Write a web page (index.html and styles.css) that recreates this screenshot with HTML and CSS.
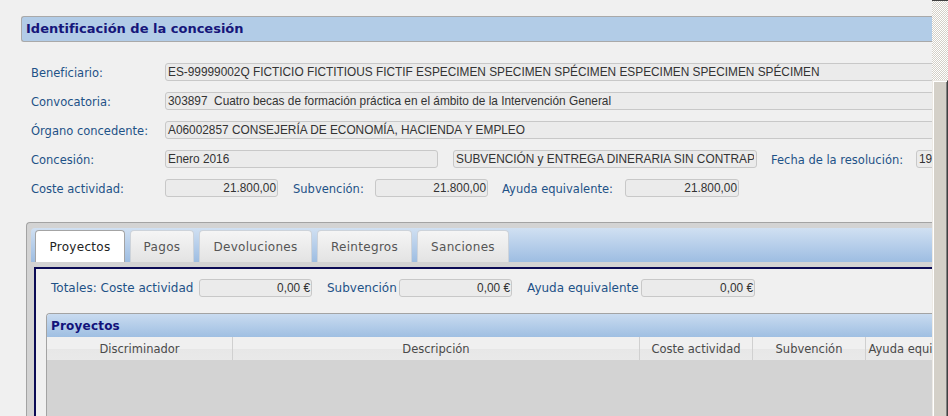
FILE: index.html
```html
<!DOCTYPE html>
<html lang="es">
<head>
<meta charset="utf-8">
<title>Identificación de la concesión</title>
<link rel="stylesheet" href="styles.css">
</head>
<body>
<div class="screen">
  <div class="viewport">
    <div class="page">
      <div class="section-title">Identificación de la concesión</div>

      <div class="form">
        <div class="row">
          <span class="lbl">Beneficiario:</span>
          <span class="field w-long">ES-99999002Q FICTICIO FICTITIOUS FICTIF ESPECIMEN SPECIMEN SPÉCIMEN ESPECIMEN SPECIMEN SPÉCIMEN</span>
        </div>
        <div class="row">
          <span class="lbl">Convocatoria:</span>
          <span class="field w-long">303897&nbsp; Cuatro becas de formación práctica en el ámbito de la Intervención General</span>
        </div>
        <div class="row">
          <span class="lbl">Órgano concedente:</span>
          <span class="field w-long">A06002857 CONSEJERÍA DE ECONOMÍA, HACIENDA Y EMPLEO</span>
        </div>
        <div class="row">
          <span class="lbl">Concesión:</span>
          <span class="field w-conc gap-r15">Enero 2016</span>
          <span class="field w-tipo gap-r14"><span class="clip">SUBVENCIÓN y ENTREGA DINERARIA SIN CONTRAPRESTACIÓN</span></span>
          <span class="lbl lbl-fecha">Fecha de la resolución:</span>
          <span class="field w-fecha">19/01/2016</span>
        </div>
        <div class="row">
          <span class="lbl">Coste actividad:</span>
          <span class="field num w-num gap-r15">21.800,00</span>
          <span class="lbl lbl-subv">Subvención:</span>
          <span class="field num w-num gap-r14">21.800,00</span>
          <span class="lbl lbl-ayuda">Ayuda equivalente:</span>
          <span class="field num w-num2">21.800,00</span>
        </div>
      </div>

      <div class="tabpanel">
        <div class="tabstrip">
          <div class="tab active t-proy">Proyectos</div>
          <div class="tab t-pagos">Pagos</div>
          <div class="tab t-dev">Devoluciones</div>
          <div class="tab t-rein">Reintegros</div>
          <div class="tab t-sanc">Sanciones</div>
        </div>
        <div class="tabcontent">
          <div class="totals">
            <span class="tlbl tl-coste">Totales: Coste actividad</span>
            <span class="field num w-num">0,00 €</span>
            <span class="tlbl tl-subv">Subvención</span>
            <span class="field num w-num">0,00 €</span>
            <span class="tlbl tl-ayuda">Ayuda equivalente</span>
            <span class="field num w-num2">0,00 €</span>
          </div>

          <div class="grid-panel">
            <div class="grid-title">Proyectos</div>
            <div class="grid-head">
              <div class="col c-disc">Discriminador</div>
              <div class="col c-desc">Descripción</div>
              <div class="col c-num">Coste actividad</div>
              <div class="col c-num">Subvención</div>
              <div class="col c-num">Ayuda equivalente</div>
              <div class="col c-rest"></div>
            </div>
            <div class="grid-body"></div>
          </div>
        </div>
      </div>
    </div>
  </div>
  <div class="scrollbar">
    <div class="sb-top"></div>
    <div class="sb-track"></div>
    <div class="sb-thumb"></div>
  </div>
</div>
</body>
</html>
```

FILE: styles.css
```css
* { box-sizing: border-box; }

html, body {
  margin: 0;
  padding: 0;
  background: #f0f0f0;
}

body {
  font-family: "DejaVu Sans", Verdana, sans-serif;
}

.screen {
  display: flex;
  width: 948px;
  height: 416px;
  overflow: hidden;
}

.viewport {
  flex: none;
  width: 932px;
  height: 416px;
  overflow: hidden;
}

.page {
  width: 1150px;
  padding: 16px 0 0 21px;
}

/* Section title */
.section-title {
  height: 26px;
  border: 1px solid #a9a9a9;
  border-right: none;
  border-radius: 3px 0 0 3px;
  background: #b2cce7;
  color: #16167a;
  font-family: "DejaVu Sans", Verdana, sans-serif;
  font-weight: bold;
  font-size: 13px;
  line-height: 24px;
  padding-left: 4px;
}

/* Form */
.form {
  margin-top: 21px;
  padding-left: 10px;
  display: flex;
  flex-direction: column;
  gap: 11px;
}

.row {
  display: flex;
  align-items: center;
  height: 18px;
}

.lbl {
  flex: none;
  width: 134px;
  font-size: 11.5px;
  color: #1e5287;
  white-space: nowrap;
  padding-top: 1px;
}

.lbl-fecha { width: 145px; }
.lbl-subv { width: 82px; }
.lbl-ayuda { width: 123px; }

.field {
  flex: none;
  display: block;
  height: 18px;
  border: 1px solid #c8c8c8;
  border-radius: 3px;
  background: #ebebeb;
  font-family: "Liberation Sans", Arial, sans-serif;
  font-size: 11.85px;
  line-height: 17px;
  color: #333;
  padding: 0 2px 0 2px;
  white-space: nowrap;
  overflow: hidden;
}

.field.num { text-align: right; padding-right: 1px; }

.clip {
  display: block;
  overflow: hidden;
  white-space: nowrap;
}

.w-long { width: 900px; }
.w-conc { width: 273px; }
.w-tipo { width: 304px; }
.w-fecha { width: 80px; }
.w-num { width: 113px; }
.w-num2 { width: 114px; }

.gap-r15 { margin-right: 15px; }
.gap-r14 { margin-right: 14px; }

/* Tab panel */
.tabpanel {
  margin: 25px 0 0 5px;
  height: 300px;
  border: 1px solid #a3a3a3;
  border-right: none;
  border-bottom: none;
  border-radius: 4px 0 0 0;
  background: #d3d3d3;
  padding: 5px 0 0 4px;
}

.tabstrip {
  height: 34px;
  border-radius: 4px 0 0 0;
  background: linear-gradient(#d0e0f2, #9dbde2);
  padding: 2px 0 0 4px;
  display: flex;
  gap: 5px;
  align-items: flex-end;
}

.tab {
  flex: none;
  height: 32px;
  border: 1px solid #cdd3da;
  border-bottom: none;
  border-radius: 4px 4px 0 0;
  background: linear-gradient(#f5f5f5, #e3e3e3);
  font-size: 12px;
  color: #555;
  display: flex;
  align-items: center;
  justify-content: center;
  letter-spacing: 0.3px;
}

.tab.active {
  background: #fff;
  border-color: #a4a4a4;
  color: #222;
}

.t-proy { width: 90px; }
.t-pagos { width: 64px; }
.t-dev { width: 113px; }
.t-rein { width: 95px; }
.t-sanc { width: 92px; }

.tabcontent {
  margin: 5px 0 0 3px;
  height: 260px;
  border-top: 2px solid #0b0b55;
  border-left: 2px solid #0b0b55;
  background: #f0f0f0;
  padding: 10px 0 0 10px;
}

.totals {
  margin-left: 5px;
  display: flex;
  align-items: center;
  height: 18px;
}

.tlbl {
  flex: none;
  font-size: 12px;
  color: #1e5287;
  white-space: nowrap;
}

.tl-coste { width: 148px; }
.tl-subv { width: 72px; margin-left: 15px; }
.tl-ayuda { width: 114px; margin-left: 15px; }

/* Grid */
.grid-panel {
  margin-top: 16px;
  border-top: 1px solid #a3a3a3;
  border-left: 1px solid #a3a3a3;
  border-radius: 4px 0 0 0;
}

.grid-title {
  height: 23px;
  border-radius: 3px 0 0 0;
  background: linear-gradient(#c9dbf0, #9fbfe2);
  color: #12127a;
  font-weight: bold;
  font-size: 12px;
  line-height: 24px;
  padding-left: 4px;
  letter-spacing: 0.2px;
}

.grid-head {
  display: flex;
  height: 23px;
  background: linear-gradient(#f0f0f0 0, #f0f0f0 50%, #e7e7e7 50%, #e9e9e9 100%);
}

.col {
  flex: none;
  border-right: 1px solid #d0d0d0;
  font-size: 11.5px;
  color: #4a4a4a;
  line-height: 24px;
  text-align: center;
  white-space: nowrap;
  overflow: hidden;
}

.c-disc { width: 186px; }
.c-desc { width: 407px; }
.c-num { width: 113px; }
.c-rest { width: 100px; border-right: none; }

.grid-body {
  height: 200px;
  background: #d3d3d3;
}

/* Scrollbar */
.scrollbar {
  flex: none;
  width: 16px;
  height: 416px;
  display: flex;
  flex-direction: column;
}

.sb-top {
  height: 1px;
  background: #404040;
}

.sb-track {
  height: 79px;
  background: repeating-conic-gradient(#ffffff 0 25%, #d4d0c8 0 50%) 0 0 / 2px 2px;
}

.sb-thumb {
  flex: 1;
  background: #d4d0c8;
  border-left: 1px solid #ece9e4;
  border-top: 1px solid #ece9e4;
  border-right: 1px solid #404040;
  box-shadow: inset 1px 1px #ffffff, inset -1px 0 #808080;
}
```
